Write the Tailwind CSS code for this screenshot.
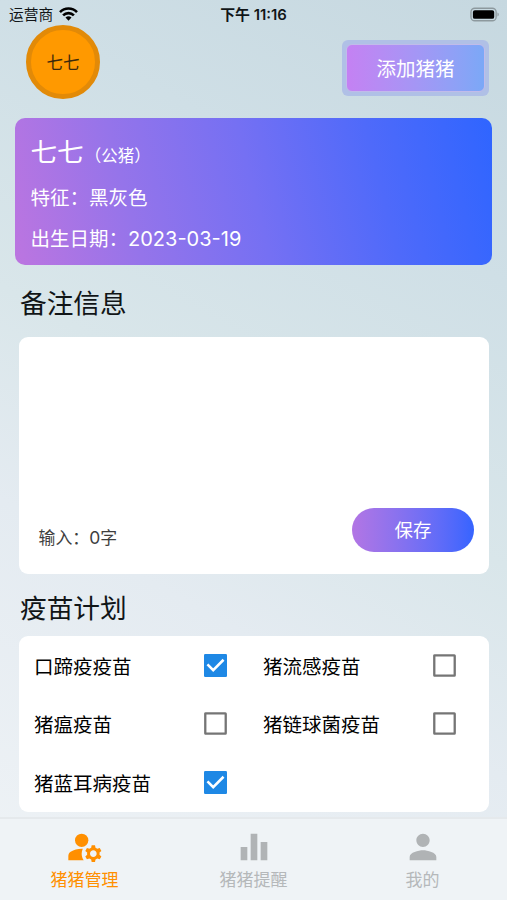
<!DOCTYPE html>
<html lang="zh-CN">
<head>
    <meta charset="UTF-8">
    <meta name="viewport" content="width=device-width, initial-scale=1.0">
    <title>猪猪管理</title>
    <script src="https://cdn.jsdelivr.net/npm/@tailwindcss/browser@4"></script>
    <style>
        body {
            font-family: Inter, "Noto Sans CJK SC", sans-serif;
        }
    </style>
</head>
<body class="w-[507px] h-[900px] overflow-hidden flex flex-col text-[#111517] bg-[linear-gradient(209deg,#c6d8e0_0%,#cfdfe6_24%,#d9e6ea_48%,#e4ebf1_66%,#eff3f6_100%)]">

    <!-- Barra de estado -->
    <header class="h-[25px] shrink-0 grid grid-cols-3 items-center pl-[9px] pr-[7px] leading-[25px]">
        <div class="flex items-center gap-[6px]">
            <span class="pt-[3px] text-[14.7px]">运营商</span>
            <svg class="w-[19px] h-[14px]" viewBox="0 0 19 14" fill="none" stroke="#000" stroke-width="2.6">
                <path d="M1 5.1a12 12 0 0 1 17 0"/>
                <path d="M4.1 8.4a7.6 7.6 0 0 1 10.8 0"/>
                <path d="M9.5 13.8l-3-3.2a4.3 4.3 0 0 1 6 0z" fill="#000" stroke="none"/>
            </svg>
        </div>
        <div class="pt-[2px] -ml-[2px] text-center text-[14.9px] font-semibold whitespace-nowrap">下午 11:16</div>
        <div class="flex justify-end">
            <svg class="w-[30px] h-[15px]" viewBox="0 0 31 15">
                <rect x="1" y="1" width="26" height="13" rx="4" fill="none" stroke="#8d999e" stroke-width="1.4"/>
                <rect x="3" y="3" width="22" height="9" rx="2" fill="#000"/>
                <path d="M28.4 5.4v4.2c1.8-.8 1.8-3.4 0-4.2z" fill="#8d999e"/>
            </svg>
        </div>
    </header>

    <!-- Avatar y botón para añadir -->
    <div class="h-[93px] shrink-0 flex justify-between items-start pl-[26px] pr-[18px]">
        <div class="size-[74px] rounded-full bg-[#ff9900] border-[5px] border-[#e28a08] flex items-center justify-center pt-[2px] text-[16.5px] text-[#3d2a0c]">七七</div>
        <button class="mt-[15px] w-[147px] h-[56px] p-[4px] rounded-[6px] bg-[#b0c0e6]">
            <span class="flex h-full items-center justify-center rounded-[6px] border border-[#c1bbea] bg-linear-to-r from-[#c481f3] to-[#7ba8f7] pt-[4px] text-white text-[19.5px]">添加猪猪</span>
        </button>
    </div>

    <!-- Ficha del cerdo -->
    <section class="ml-[15px] w-[477px] h-[147px] shrink-0 rounded-[10px] pl-[15.5px] pt-[14px] text-white text-[19.5px] bg-[linear-gradient(76deg,#bc75e0_0%,#9574ea_25%,#7570f3_50%,#4f6afa_75%,#2f65ff_100%)]">
        <div class="h-[46px] flex items-baseline leading-[40px]">
            <span class="text-[26.6px]">七七</span>
            <span class="ml-[1px] text-[16.5px]">（公猪）</span>
        </div>
        <div class="h-[41px] leading-[41px]">特征：黑灰色</div>
        <div class="h-[40px] leading-[40px]">出生日期：<span class="text-[20px]">2023-03-19</span></div>
    </section>

    <!-- Notas -->
    <h2 class="h-[72px] shrink-0 pl-[20px] pt-[1px] leading-[75px] text-[26.7px]">备注信息</h2>
    <section class="ml-[19px] w-[470px] h-[237px] shrink-0 rounded-[9px] bg-white flex items-end justify-between pl-[19.5px] pr-[15px] pb-[22px]">
        <span class="h-[29px] leading-[30px] text-[16.9px] text-[#3e3e3e]">输入：<span class="text-[17.5px]">0</span>字</span>
        <button class="w-[122px] h-[44px] rounded-full pt-[2px] text-white text-[18.5px] bg-linear-to-r from-[#b275e4] to-[#3564ff]">保存</button>
    </section>

    <!-- Plan de vacunas -->
    <h2 class="h-[62px] shrink-0 pl-[20px] pt-[1px] leading-[66px] text-[26.7px]">疫苗计划</h2>
    <section class="ml-[19px] w-[470px] h-[176px] shrink-0 rounded-[9px] bg-white pl-[15px] grid grid-cols-[229px_229px] grid-rows-3 items-center text-[19.5px] text-black">
        <div class="flex items-center justify-between pr-[36px]">
            <span class="pt-[4px]">口蹄疫疫苗</span>
            <svg class="size-[23px]" viewBox="0 0 18 18"><rect width="18" height="18" rx="1" fill="#1e88e5"/><path d="M2.7 8.1l4.5 4.5 8.1-8.1" fill="none" stroke="#fff" stroke-width="2"/></svg>
        </div>
        <div class="flex items-center justify-between pr-[36px]">
            <span class="pt-[4px]">猪流感疫苗</span>
            <svg class="size-[23px]" viewBox="0 0 18 18"><rect x="1" y="1" width="16" height="16" rx=".3" fill="none" stroke="#757575" stroke-width="1.8"/></svg>
        </div>
        <div class="flex items-center justify-between pr-[36px]">
            <span class="pt-[4px]">猪瘟疫苗</span>
            <svg class="size-[23px]" viewBox="0 0 18 18"><rect x="1" y="1" width="16" height="16" rx=".3" fill="none" stroke="#757575" stroke-width="1.8"/></svg>
        </div>
        <div class="flex items-center justify-between pr-[36px]">
            <span class="pt-[4px]">猪链球菌疫苗</span>
            <svg class="size-[23px]" viewBox="0 0 18 18"><rect x="1" y="1" width="16" height="16" rx=".3" fill="none" stroke="#757575" stroke-width="1.8"/></svg>
        </div>
        <div class="flex items-center justify-between pr-[36px]">
            <span class="pt-[4px]">猪蓝耳病疫苗</span>
            <svg class="size-[23px]" viewBox="0 0 18 18"><rect width="18" height="18" rx="1" fill="#1e88e5"/><path d="M2.7 8.1l4.5 4.5 8.1-8.1" fill="none" stroke="#fff" stroke-width="2"/></svg>
        </div>
    </section>

    <!-- Navegación inferior -->
    <nav class="mt-[5px] h-[83px] shrink-0 grid grid-cols-3 border-t-2 border-[#e5e9ec] bg-[#eff3f6] pt-[8px] text-[17px] text-[#b5b8ba]">
        <a class="flex flex-col items-center text-[#ff8f00]">
            <svg class="size-[40px]" viewBox="0 0 24 24" fill="currentColor">
                <circle cx="10" cy="8" r="4"/>
                <path d="M10.67,13.02C10.45,13.01,10.23,13,10,13c-2.42,0-4.68,0.67-6.61,1.82C2.51,15.34,2,16.32,2,17.35V20h9.26C10.47,18.87,10,17.49,10,16C10,14.93,10.25,13.93,10.67,13.02z"/>
                <path d="M20.75,16c0-0.22-0.03-0.42-0.06-0.63l1.14-1.01l-1-1.73l-1.45,0.49c-0.32-0.27-0.68-0.48-1.08-0.63L18,11h-2l-0.3,1.49c-0.4,0.15-0.76,0.36-1.08,0.63l-1.45-0.49l-1,1.73l1.14,1.01c-0.03,0.21-0.06,0.41-0.06,0.63s0.03,0.42,0.06,0.63l-1.14,1.01l1,1.73l1.45-0.49c0.32,0.27,0.68,0.48,1.08,0.63L16,21h2l0.3-1.49c0.4-0.15,0.76-0.36,1.08-0.63l1.45,0.49l1-1.73l-1.14-1.01C20.72,16.42,20.75,16.22,20.75,16z M17,18c-1.1,0-2-0.9-2-2s0.9-2,2-2s2,0.9,2,2S18.1,18,17,18z"/>
            </svg>
            <span class="leading-[26px]">猪猪管理</span>
        </a>
        <a class="flex flex-col items-center">
            <svg class="size-[40px]" viewBox="0 0 24 24" fill="#b0b3b5"><path d="M10 20h4V4h-4v16zm-6 0h4v-8H4v8zM16 9v11h4V9h-4z"/></svg>
            <span class="leading-[26px]">猪猪提醒</span>
        </a>
        <a class="flex flex-col items-center">
            <svg class="size-[40px]" viewBox="0 0 24 24" fill="#b0b3b5"><path d="M12 12c2.21 0 4-1.79 4-4s-1.79-4-4-4-4 1.79-4 4 1.79 4 4 4zm0 2c-2.67 0-8 1.34-8 4v2h16v-2c0-2.66-5.33-4-8-4z"/></svg>
            <span class="leading-[26px]">我的</span>
        </a>
    </nav>
</body>
</html>
